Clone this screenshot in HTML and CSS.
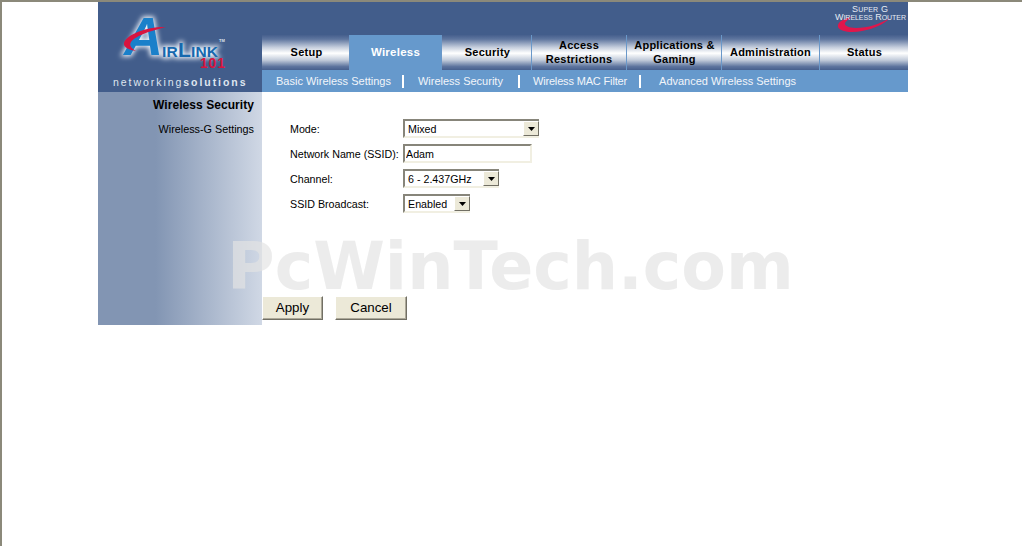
FILE: index.html
```html
<!DOCTYPE html>
<html lang="en">
<head>
<meta charset="utf-8">
<title>Wireless Security</title>
<link rel="stylesheet" href="styles.css">
</head>
<body>
<div class="app">
  <div class="logo">
    <svg class="logo-svg" width="164" height="90" viewBox="0 0 164 90">
      <defs>
        <filter id="glow" x="-20%" y="-20%" width="140%" height="140%"><feGaussianBlur stdDeviation="2.4"/></filter>
      </defs>
      <g filter="url(#glow)" fill="#eef4fc" stroke="#eef4fc" stroke-width="3">
        <text x="26" y="53" class="logo-a">A</text>
        <text x="64" y="55" class="logo-rest">IR<tspan class="logo-l">L</tspan>INK</text>
      </g>
      <text x="26" y="53" class="logo-a" fill="#1a80ca">A</text>
      <path d="M68 25 C52 24 28 32 26 41 C25 45 31 48 38 49 C33 46 31 43 33 40 C38 33 56 28 68 25Z" fill="#d8143f"/>
      <text x="64" y="55" class="logo-rest" fill="#1668ae">IR<tspan class="logo-l">L</tspan>INK</text>
      <text x="102" y="66" class="logo-101">101</text>
      <text x="121" y="40" class="logo-tm">TM</text>
      <text x="15" y="84" class="logo-tag">networking<tspan class="logo-tag-b">solutions</tspan></text>
    </svg>
  </div>
  <div class="top">
    <div class="brand">
      <svg width="74" height="30" viewBox="0 0 74 30">
        <path d="M18 13 C8 15 3 19 4 23 C6 28 18 29 28 27 C40 25 50 20 56 14 C46 20 34 24 22 24 C14 24 10 21 11 19 C12 17 15 15 18 13Z" fill="#e0164c"/>
        <text x="18" y="8" class="brand-text" textLength="36">S<tspan class="brand-sm">UPER</tspan> G</text>
        <text x="1" y="15.5" class="brand-text" textLength="71">W<tspan class="brand-sm">IRELESS</tspan> R<tspan class="brand-sm">OUTER</tspan></text>
      </svg>
    </div>
    <nav class="tabs">
      <a class="tab tab-setup">Setup</a>
      <a class="tab tab-wireless active">Wireless</a>
      <a class="tab tab-security">Security</a>
      <a class="tab tab-access">Access<br>Restrictions</a>
      <a class="tab tab-apps">Applications &amp;<br>Gaming</a>
      <a class="tab tab-admin">Administration</a>
      <a class="tab tab-status">Status</a>
    </nav>
    <nav class="subnav">
      <a class="sub">Basic Wireless Settings</a>
      <i class="sep sep-1"></i>
      <a class="sub">Wireless Security</a>
      <i class="sep sep-2"></i>
      <a class="sub sub-mac">Wireless MAC Filter</a>
      <i class="sep sep-3"></i>
      <a class="sub">Advanced Wireless Settings</a>
    </nav>
  </div>
  <aside class="side">
    <h1 class="side-title">Wireless Security</h1>
    <p class="side-sub">Wireless-G Settings</p>
  </aside>
  <main class="content">
    <form class="form">
      <label class="lbl">Mode:</label>
      <div class="select w-mode"><select class="sel"><option>Mixed</option></select><span class="arrow"><svg width="7" height="4" viewBox="0 0 7 4"><path d="M0 0h7L3.5 4z"/></svg></span></div>
      <label class="lbl">Network Name (SSID):</label>
      <input class="text-input" type="text" value="Adam">
      <label class="lbl">Channel:</label>
      <div class="select w-channel"><select class="sel"><option>6 - 2.437GHz</option></select><span class="arrow"><svg width="7" height="4" viewBox="0 0 7 4"><path d="M0 0h7L3.5 4z"/></svg></span></div>
      <label class="lbl">SSID Broadcast:</label>
      <div class="select w-bcast"><select class="sel"><option>Enabled</option></select><span class="arrow"><svg width="7" height="4" viewBox="0 0 7 4"><path d="M0 0h7L3.5 4z"/></svg></span></div>
    </form>
    <div class="actions">
      <button class="btn btn-apply" type="button">Apply</button>
      <button class="btn btn-cancel" type="button">Cancel</button>
    </div>
  </main>
  <div class="watermark">PcWinTech.com</div>
</div>
</body>
</html>
```

FILE: styles.css
```css
* { box-sizing: border-box; }
html, body { margin: 0; height: 100%; background: #fff; overflow: hidden; }
body {
  border-top: 2px solid #8b897a;
  border-left: 2px solid #8b897a;
  font-family: "Liberation Sans", Arial, sans-serif;
}
.app {
  position: relative;
  width: 810px;
  margin-left: 96px;
  display: grid;
  grid-template-columns: 164px 646px;
  grid-template-rows: 90px 233px;
}
.logo { background: #425d8b; }
.logo-svg { display: block; }
.logo-a { font: italic bold 54px "Liberation Sans", sans-serif; }
.logo-rest { font: bold 15.5px "Liberation Sans", sans-serif; letter-spacing: .2px; }
.logo-l { font-size: 21px; }
.logo-101 { font: bold 14px "Liberation Sans", sans-serif; fill: #d8143f; letter-spacing: .8px; }
.logo-tm { font: bold 4px "Liberation Sans", sans-serif; fill: #dfe6f0; }
.logo-tag { font: 10.5px "Liberation Sans", sans-serif; fill: #dfe6f0; letter-spacing: 1.95px; }
.logo-tag-b { font-weight: bold; }

.top { background: #425d8b; display: flex; flex-direction: column; }
.brand { height: 33px; display: flex; justify-content: flex-end; padding-top: 2px; }
.brand-text { font: 9px "Liberation Sans", sans-serif; fill: #e6ebf3; }
.brand-sm { font-size: 7px; }

.tabs { display: flex; height: 35px; }
.tab {
  display: flex;
  align-items: center;
  justify-content: center;
  text-align: center;
  padding-bottom: 2px;
  font-size: 11px;
  font-weight: bold;
  line-height: 14px;
  letter-spacing: .25px;
  color: #000;
  background: linear-gradient(#465f8d 0, #5f769f 12%, #c4cddc 35%, #fff 52%, #c0cad9 72%, #5d749e 90%, #465f8d 100%);
}
.tab + .tab { border-left: 1px solid #6a98c9; }
.tab-setup { width: 87px; border: 0; padding-left: 2px; }
.tab-wireless { width: 92px; border: 0; }
.tab-security { width: 90px; border: 0; padding-left: 2px; }
.tab-access { width: 95px; }
.tab-apps { width: 95px; padding-left: 1px; }
.tab-admin { width: 98px; }
.tab-status { width: 89px; padding-left: 1px; }
.tab.active { background: #6699cc; color: #fff; font-size: 11.5px; }

.subnav {
  height: 22px;
  background: #6699cc;
  display: flex;
  align-items: center;
  padding-left: 14px;
  font-size: 11px;
  color: #fff;
}
.sub { color: #f2f5fa; white-space: nowrap; }
.sub-mac { letter-spacing: -.16px; }
.sep { width: 2px; height: 13px; background: #fff; }
.sep-1 { margin: 0 14px 0 11px; }
.sep-2 { margin: 0 13px 0 15px; }
.sep-3 { margin: 0 18px 0 12px; }

.side {
  background: linear-gradient(90deg, #8295b3 0, #8295b3 35%, #d0d8e5 100%);
  padding: 6px 8px 0 0;
  text-align: right;
}
.side-title { margin: 0; font-size: 12px; line-height: 14px; font-weight: bold; color: #000; letter-spacing: .06px; }
.side-sub { margin: 10px 0 0; font-size: 10.8px; line-height: 14px; color: #000; }

.content { background: #fff; display: flex; flex-direction: column; }
.form {
  display: grid;
  grid-template-columns: 113px max-content;
  grid-auto-rows: 19px;
  row-gap: 6px;
  align-items: center;
  justify-items: start;
  margin: 27px 0 0 28px;
}
.lbl { font-size: 10.7px; color: #000; white-space: nowrap; }
.select {
  display: flex;
  height: 19px;
  background: #fff;
  border: 2px solid;
  border-color: #87857a #f1efe2 #f1efe2 #87857a;
  border-right: 0;
  align-items: center;
}
.w-mode { width: 136px; }
.w-channel { width: 96px; }
.w-bcast { width: 67px; }
.sel {
  appearance: none;
  flex: 1;
  min-width: 0;
  border: 0;
  background: transparent;
  padding: 0 0 0 3px;
  margin: 0;
  font: 10.7px "Liberation Sans", sans-serif;
  color: #000;
  outline: 0;
}
.arrow {
  flex: none;
  width: 16px;
  height: 15px;
  display: flex;
  align-items: center;
  justify-content: center;
  background: #ece9d8;
  border: 1px solid;
  border-color: #fff #716f64 #716f64 #fff;
}
.arrow svg { display: block; fill: #000; }
.text-input {
  width: 129px;
  height: 19px;
  border: 2px solid;
  border-color: #87857a #f1efe2 #f1efe2 #87857a;
  background: #fff;
  padding: 0 0 0 1px;
  margin: 0;
  font: 10.7px "Liberation Sans", sans-serif;
  color: #000;
  outline: 0;
}
.actions { display: flex; gap: 12px; margin-top: 83px; }
.btn {
  height: 24px;
  padding: 0 0 1px;
  background: #ece9d8;
  border: 1px solid;
  border-color: #fff #716f64 #716f64 #fff;
  box-shadow: inset -1px -1px 0 #aca899;
  font: 13.3px "Liberation Sans", sans-serif;
  color: #000;
}
.btn-apply { width: 61px; }
.btn-cancel { width: 72px; }

.watermark {
  position: absolute;
  left: 129px;
  top: 240px;
  font: bold 65px/50px "DejaVu Sans", sans-serif;
  color: rgba(227, 227, 227, .68);
  white-space: nowrap;
  pointer-events: none;
}
```
